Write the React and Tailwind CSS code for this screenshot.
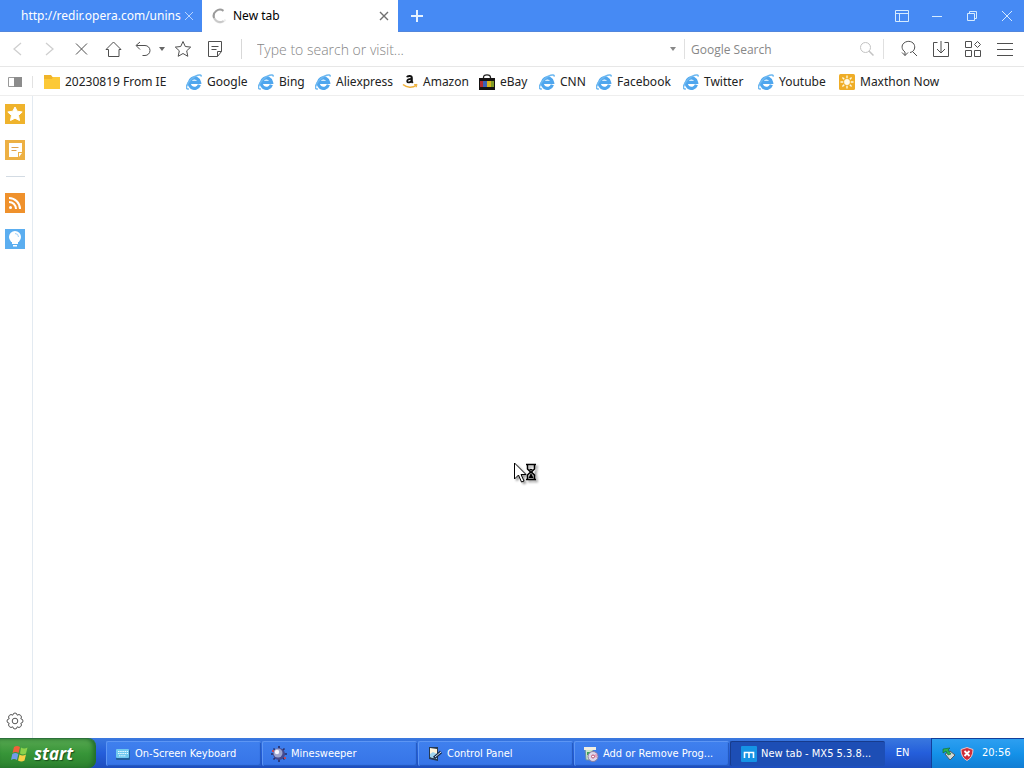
import React, { useState } from 'react';

const bookmarks = [
  { label: '20230819 From IE', icon: 'folder', width: 'w-[142px]' },
  { label: 'Google', icon: 'ie', width: 'w-[72px]' },
  { label: 'Bing', icon: 'ie', width: 'w-[57px]' },
  { label: 'Aliexpress', icon: 'ie', width: 'w-[87px]' },
  { label: 'Amazon', icon: 'amazon', width: 'w-[77px]' },
  { label: 'eBay', icon: 'ebay', width: 'w-[60px]' },
  { label: 'CNN', icon: 'ie', width: 'w-[57px]' },
  { label: 'Facebook', icon: 'ie', width: 'w-[87px]' },
  { label: 'Twitter', icon: 'ie', width: 'w-[75px]' },
  { label: 'Youtube', icon: 'ie', width: 'w-[81px]' },
  { label: 'Maxthon Now', icon: 'maxthon', width: 'w-[102px]' },
];

const tasks = [
  { label: 'On-Screen Keyboard', icon: 'keyboard' },
  { label: 'Minesweeper', icon: 'mine' },
  { label: 'Control Panel', icon: 'panel' },
  { label: 'Add or Remove Prog...', icon: 'programs' },
  { label: 'New tab - MX5 5.3.8...', icon: 'mx', active: true },
];

function BookmarkIcon({ name }) {
  if (name === 'folder') {
    return (
      <svg className="h-4 w-4 shrink-0" viewBox="0 0 16 16">
        <path d="M0 1h7l1.500 2H16v12H0z" fill="#f0b429" />
        <path d="M0 5h8l1-2h7v12H0z" fill="#fcc937" />
      </svg>
    );
  }
  if (name === 'amazon') {
    return (
      <svg className="h-4 w-4 shrink-0" viewBox="0 0 16 16">
        <path d="M5 3.300C5.600 1.300 9.800 1.400 9.800 3.800v3.900l1 1.200" fill="none" stroke="#111" strokeWidth="2" />
        <path d="M9.500 4.800C6.500 4.800 5 5.700 5.200 7.300c.2 1.700 3.600 1.500 4.400-.7" fill="none" stroke="#111" strokeWidth="1.800" />
        <path d="M1 10.500c4 3.400 9.500 3.500 13.300.8" fill="none" stroke="#efb13a" strokeWidth="1.600" />
        <path d="M12 10.700l3-.3-.8 2.900" fill="none" stroke="#efb13a" />
      </svg>
    );
  }
  if (name === 'ebay') {
    return (
      <svg className="h-4 w-4 shrink-0" viewBox="0 0 16 16">
        <path d="M4.500 5V3.500Q4.500.8 8 .8t3.500 2.700V5" fill="none" stroke="#222" strokeWidth="1.300" />
        <path d="M0 4h16v12H0z" fill="#151313" />
        <path d="M1 7h3v6H1z" fill="#b52b30" />
        <path d="M4 7h4v6H4z" fill="#3d62b8" />
        <path d="M8 7h4v6H8z" fill="#d6b51e" />
        <path d="M12 7h3v6h-3z" fill="#819b28" />
      </svg>
    );
  }
  if (name === 'maxthon') {
    return (
      <svg className="h-4 w-4 shrink-0" viewBox="0 0 16 16">
        <rect width="16" height="16" rx="1.500" fill="#efad27" />
        <path d="M8 1.500v13M1.500 8h13M3.400 3.400l9.200 9.200M12.600 3.400l-9.200 9.200" stroke="#fff8d8" strokeWidth="1.400" />
        <circle cx="8" cy="8" r="3.800" fill="#efad27" />
        <circle cx="8" cy="8" r="2.900" fill="#fffbe9" />
      </svg>
    );
  }
  return (
    <svg className="h-4 w-4 shrink-0" viewBox="0 0 16 16" fill="none">
      <path d="M13.400 10.800A5.200 5.200 0 1 1 13.600 8.400H4.500" stroke="#4fa6ee" strokeWidth="3.200" />
      <path d="M2.800 14.800C-1 16-.2 10.500 5 5.400 9.300 1.200 15 -.6 15.400 2.600" stroke="#6db8f1" strokeWidth="1.600" />
    </svg>
  );
}

function TaskIcon({ name }) {
  switch (name) {
    case 'keyboard':
      return (
        <svg className="h-4 w-4 shrink-0" viewBox="0 0 16 16">
          <rect x="1" y="4" width="14" height="10" rx="1" fill="#235f9b" />
          <rect x="1" y="3" width="13" height="9" rx="1" fill="#70c9ef" />
          <path d="M3 5.500h10M3 7.500h10M4 9.800h7" stroke="#e5fbff" strokeDasharray="1.500 .7" />
        </svg>
      );
    case 'mine':
      return (
        <svg className="h-4 w-4 shrink-0" viewBox="0 0 16 16">
          <path d="M8 0v16M0 8h16M2.500 2.500l11 11M13.500 2.500l-11 11" stroke="#272c65" strokeWidth="1.600" />
          <circle cx="8" cy="8" r="6" fill="#454b91" />
          <circle cx="7" cy="7" r="4.500" fill="#9da4cf" />
          <circle cx="6" cy="6" r="2.200" fill="#f4f5ff" />
          <path d="M1 5h2M13 12h2" stroke="#c0495b" strokeWidth="2" />
        </svg>
      );
    case 'panel':
      return (
        <svg className="h-4 w-4 shrink-0" viewBox="0 0 16 16">
          <path d="M2 1h9v14l-9-2z" fill="#263952" />
          <path d="M3 2l7 1v10l-7-2z" fill="#fff5dc" />
          <path d="M3 8l3-2 4 2v5l-7-2z" fill="#9fd4ee" />
          <path d="M7 12l7-6" stroke="#192c48" strokeWidth="3" />
          <path d="M8 11l6-5" stroke="#d9e3ef" />
        </svg>
      );
    case 'programs':
      return (
        <svg className="h-4 w-4 shrink-0" viewBox="0 0 16 16">
          <path d="M2 2h8v12H3z" fill="#cbe6c8" stroke="#668aa8" />
          <path d="M1 1h12v3H1z" fill="#f1eee0" />
          <path d="M4 6h3v3H4z" fill="#3ba45c" />
          <circle cx="10" cy="10.500" r="5" fill="#ded7eb" stroke="#887e9f" />
          <path d="M10 10l4-3v5z" fill="#e4a0bf" />
          <circle cx="10" cy="10.500" r="1.500" fill="#fff" stroke="#b9506f" />
        </svg>
      );
    default:
      return (
        <svg className="h-4 w-4 shrink-0" viewBox="0 0 16 16">
          <rect width="16" height="16" rx="1" fill="#1593e5" />
          <path d="M3.500 12V6.500h9V12M8 6.500V12" fill="none" stroke="#fff" strokeWidth="1.600" />
        </svg>
      );
  }
}

function ToolButton({ label, children, className = 'w-8 text-[#4f4f4f]' }) {
  return (
    <button type="button" aria-label={label} className={`flex h-full shrink-0 items-center justify-center ${className}`}>
      <svg className="h-[18px] w-[18px]" viewBox="0 0 18 18" fill="none" stroke="currentColor">
        {children}
      </svg>
    </button>
  );
}

function TitleBar() {
  return (
    <header className="flex h-8 shrink-0 bg-[#468af4] text-xs">
      <div className="flex w-[202px] items-center border-b border-[#5286dc] pl-[21px] text-white">
        <button type="button" className="w-40 text-left whitespace-nowrap">http://redir.opera.com/unins</button>
        <button type="button" aria-label="Close tab" className="ml-[3px]">
          <svg className="h-2.5 w-2.5" viewBox="0 0 10 10" stroke="#b7d3ff">
            <path d="M1 1l8 8M9 1L1 9" />
          </svg>
        </button>
      </div>
      <div className="flex w-[196px] items-center bg-white pr-[9px] pl-2.5 text-black">
        <svg className="h-4 w-4 shrink-0" viewBox="0 0 16 16" fill="none" strokeWidth="2">
          <path d="M13.500 11.500A6.300 6.300 0 0 1 2.500 11" stroke="#ededed" />
          <path d="M11.500 13A6.300 6.300 0 0 1 2 6" stroke="#c9c9c9" />
          <path d="M2 10A6.300 6.300 0 0 1 11.500 2.800" stroke="#9b9b9b" />
        </svg>
        <button type="button" className="ml-[5px] flex-1 text-left">New tab</button>
        <button type="button" aria-label="Close New tab">
          <svg className="h-2.5 w-2.5" viewBox="0 0 10 10" stroke="#707070" strokeWidth="1.400">
            <path d="M1 1l8 8M9 1L1 9" />
          </svg>
        </button>
      </div>
      <div className="flex flex-1 items-center border-b border-[#5286dc] pl-3 text-white">
        <button type="button" aria-label="New tab">
          <svg className="h-3.5 w-3.5" viewBox="0 0 14 14" stroke="#e5f2ff" strokeWidth="2">
            <path d="M7 1v12M1 7h12" />
          </svg>
        </button>
        <div className="ml-auto flex h-full text-[#d5ebff]">
          <ToolButton label="Skin" className="w-[35px]">
            <path d="M2.500 3.500h13v11h-13zM2.500 6.500h13M6.500 6.500v8" />
          </ToolButton>
          <ToolButton label="Minimize" className="w-[35px]">
            <path d="M4 9.500h10" />
          </ToolButton>
          <ToolButton label="Restore" className="w-[35px]">
            <path d="M4.500 6.500h7v7h-7zM6.500 6.500v-2h7v7h-2" />
          </ToolButton>
          <ToolButton label="Close" className="w-[35px]">
            <path d="M4 4l10 10M14 4L4 14" />
          </ToolButton>
        </div>
      </div>
    </header>
  );
}

function Toolbar() {
  const [address, setAddress] = useState('');
  const [query, setQuery] = useState('');

  return (
    <div className="flex h-[35px] shrink-0 items-center border-b border-[#e7e7e7] pr-[3px] pl-px">
      <ToolButton label="Back" className="w-8 text-[#cfcfcf]">
        <path d="M13 3L6 9l7 6" strokeWidth="1.300" />
      </ToolButton>
      <ToolButton label="Forward" className="w-8 text-[#cfcfcf]">
        <path d="M6 3l7 6-7 6" strokeWidth="1.300" />
      </ToolButton>
      <ToolButton label="Stop">
        <path d="M4 3.500l11 11M15 3.500l-11 11" />
      </ToolButton>
      <ToolButton label="Home">
        <path d="M2 9.500L9.500 2l7.500 7.500h-2v7H4.500v-7z" />
      </ToolButton>
      <ToolButton label="Undo" className="w-7 text-[#4f4f4f]">
        <path d="M6 2L2 5.500l4 4M2.500 5.500H11a5 5 0 0 1 0 10H8.500" />
      </ToolButton>
      <button type="button" aria-label="Closed tabs" className="flex w-2.5 justify-center">
        <svg className="h-1 w-1.5" viewBox="0 0 6 4"><path d="M0 0h6L3 4z" fill="#666" /></svg>
      </button>
      <ToolButton label="Favorite">
        <path d="M9 1.500l2.300 5 5.400.6-4 3.700 1.100 5.500L9 13.500l-4.800 2.800 1.100-5.500-4-3.700 5.400-.6z" />
      </ToolButton>
      <ToolButton label="Notes">
        <path d="M2.500 1.500h13v10l-4 5h-9zM11.500 16.500v-5h4M5.500 6.500h7M5.500 9.500h5" />
      </ToolButton>
      <span className="ml-2.5 h-5 w-px bg-[#d8d8d8]" />
      <input
        type="text"
        aria-label="Address"
        value={address}
        onChange={(e) => setAddress(e.target.value)}
        placeholder="Type to search or visit..."
        className="h-full min-w-0 flex-1 pl-[15px] font-[Open_Sans,sans-serif] text-sm font-light outline-none placeholder:text-[#858585]"
      />
      <button type="button" aria-label="Address history" className="flex w-[22px] justify-center">
        <svg className="h-1 w-1.5" viewBox="0 0 6 4"><path d="M0 0h6L3 4z" fill="#888" /></svg>
      </button>
      <span className="h-5 w-px bg-[#e0e0e0]" />
      <input
        type="text"
        aria-label="Search"
        value={query}
        onChange={(e) => setQuery(e.target.value)}
        placeholder="Google Search"
        className="h-full w-[166px] pl-1.5 font-[Open_Sans,sans-serif] text-xs outline-none placeholder:text-[#878787]"
      />
      <ToolButton label="Search" className="w-8 text-[#c3c3c3]">
        <circle cx="7.500" cy="7.500" r="5" />
        <path d="M11 11l4.500 4.500" strokeWidth="1.500" />
      </ToolButton>
      <span className="mr-[9px] h-5 w-px bg-[#e0e0e0]" />
      <ToolButton label="Snap">
        <path d="M2 12.500l3 3 3-3M5 15.500V12C1.300 9.500 1.300 5 4 3c4-3.200 9.500-1.400 10.500 2.500.9 3.600-1.200 6.500-4.500 7M12.500 11.500l4.500 4.500" />
      </ToolButton>
      <ToolButton label="Downloads">
        <path d="M5.500 2.500h-4v14h15v-14h-4M9 1v11.500M5 9l4 4 4-4" />
      </ToolButton>
      <ToolButton label="Extensions">
        <path d="M1.500 1.500h6v6h-6zM1.500 10.500h6v6h-6zM10.500 10.500h6v6h-6zM13.500 1.500l3 3-3 3-3-3z" />
      </ToolButton>
      <ToolButton label="Menu">
        <path d="M1 3.500h16M1 9.500h16M1 15.500h16" />
      </ToolButton>
    </div>
  );
}

function BookmarkBar() {
  return (
    <nav className="flex h-[29px] shrink-0 items-center border-b border-[#eeeeee] pt-px text-xs text-[#222]">
      <button type="button" aria-label="Toggle sidebar" className="ml-2">
        <svg className="h-2.5 w-3.5" viewBox="0 0 14 10">
          <path d="M.5.500h13v9H.5z" fill="#fff" stroke="#999" />
          <path d="M6 0h8v10H6z" fill="#8c8c8c" />
        </svg>
      </button>
      <span className="mr-[11px] ml-2.5 h-3 w-px bg-[#e2e2e2]" />
      {bookmarks.map((b) => (
        <a key={b.label} href="#" className={`flex items-center gap-[5px] whitespace-nowrap ${b.width}`}>
          <BookmarkIcon name={b.icon} />
          {b.label}
        </a>
      ))}
    </nav>
  );
}

function Sidebar() {
  return (
    <aside className="flex w-[33px] shrink-0 flex-col items-center gap-4 border-r border-[#e3eaf1] pt-2 pr-0.5 pb-2">
      <button type="button" aria-label="Favorites">
        <svg className="h-5 w-5" viewBox="0 0 20 20">
          <path d="M0 0h20v20H0z" fill="#efb32c" />
          <path d="M10 3l2.200 4.200 5 .8-3.700 3.400 1 5.100L10 14.200l-4.500 2.300 1-5.100L2.800 8l5-.8z" fill="#fff" stroke="#fff" strokeLinejoin="round" />
        </svg>
      </button>
      <button type="button" aria-label="Notes">
        <svg className="h-5 w-5" viewBox="0 0 20 20">
          <path d="M0 0h20v20H0z" fill="#edb043" />
          <path d="M4 3h13v9h-4v5H4z" fill="#fff" />
          <path d="M6.500 7.500h7M6.500 10.500h5" stroke="#dfa24e" />
          <path d="M14 17v-4h3z" fill="#fff" />
        </svg>
      </button>
      <span className="h-px w-[19px] bg-[#d3dbe3]" />
      <button type="button" aria-label="RSS">
        <svg className="h-5 w-5" viewBox="0 0 20 20" fill="none" stroke="#fff" strokeWidth="2">
          <path d="M0 0h20v20H0z" fill="#ef912c" stroke="none" />
          <circle cx="5.500" cy="14.500" r="1.500" fill="#fff" stroke="none" />
          <path d="M4 9a7 7 0 0 1 7 7M4 5a11 11 0 0 1 11 11" />
        </svg>
      </button>
      <button type="button" aria-label="Discover">
        <svg className="h-5 w-5" viewBox="0 0 20 20">
          <path d="M0 0h20v20H0z" fill="#5baef0" />
          <circle cx="10" cy="8" r="6" fill="#fff" />
          <path d="M7 12h6v3H7zM8 16h4v1.500H8z" fill="#fff" />
          <path d="M10 4.500a3.500 3.500 0 0 1 3.500 3.500" fill="none" stroke="#9fd0f7" />
        </svg>
      </button>
      <button type="button" aria-label="Settings" className="mt-auto">
        <svg className="h-[18px] w-[18px]" viewBox="0 0 18 18" fill="none" stroke="#555" strokeLinejoin="round">
          <path d="M7.500 1.500Q9 .5 10.500 1.500l.7 1.700 1.800-.7q2 .4 2.500 2.500l-.7 1.800 1.700.7q1 1.500 0 3l-1.700.7.7 1.800q-.5 2.100-2.500 2.500l-1.800-.7-.7 1.700q-1.500 1-3 0l-.7-1.700-1.800.7q-2-.4-2.500-2.500l.7-1.800-1.700-.7q-1-1.500 0-3l1.700-.7L2.500 5Q3 2.900 5 2.500l1.800.7z" />
          <circle cx="9" cy="9" r="2.800" />
        </svg>
      </button>
    </aside>
  );
}

function Taskbar() {
  return (
    <footer className="flex h-[30px] shrink-0 bg-linear-to-b from-[#3a78df] via-[#245edb] to-[#1d4dbd] font-[DejaVu_Sans_Condensed,sans-serif] text-[11px] text-white">
      <button
        type="button"
        className="mr-2.5 flex w-24 shrink-0 items-center rounded-r-lg border-t border-[#2c713c] bg-linear-to-b from-[#56a750] via-[#379538] to-[#2c812e] pl-[11px] font-[Open_Sans,sans-serif] text-[17px] leading-none font-bold italic shadow-[inset_-3px_0_4px_#226d2b] [text-shadow:1px_1px_1px_#174d1b]"
      >
        <svg className="mr-[5px] h-[18px] w-[18px]" viewBox="0 0 18 18">
          <path d="M3 2q3-2 6 0L7.500 8q-3-2-6 0z" fill="#ef603a" />
          <path d="M10 2.500q3 2 6.500 0L15 8.500q-3 2-6 0z" fill="#8cd14b" />
          <path d="M1.300 9q3-2 6 0L6 15q-3-2-6 0z" fill="#719be9" />
          <path d="M8.500 9.500q3 2 6.500 0l-1.500 6q-3 2-6.500 0z" fill="#f8cf46" />
        </svg>
        start
      </button>
      <div className="flex min-w-0 flex-1 gap-px pt-[3px] pb-0.5">
        {tasks.map((t) => (
          <button
            key={t.label}
            type="button"
            className={`flex w-[155px] min-w-0 items-center gap-1 rounded-xs border-t border-l pl-2 whitespace-nowrap ${t.active ? 'border-[#173b8c] bg-[#1d4eb5] pl-2.5' : 'border-[#5d96f4] bg-linear-to-b from-[#3f80ee] to-[#3674e7] shadow-[inset_-1px_-1px_1px_#2358be]'}`}
          >
            <TaskIcon name={t.icon} />
            <span>{t.label}</span>
          </button>
        ))}
      </div>
      <button type="button" className="w-[45px] shrink-0 pr-3">EN</button>
      <div className="flex w-[93px] shrink-0 items-center border-t border-l border-[#123f9b] bg-linear-to-b from-[#2d9ff0] via-[#1492e9] to-[#117dd3] pl-2.5">
        <svg className="h-3.5 w-3.5" viewBox="0 0 14 14">
          <path d="M3 7l5-3 5 4-5 5z" fill="#d4d8d5" stroke="#4d5c66" />
          <path d="M1 2l7-1-2 2 3 4-3 1-2-4-3 2z" fill="#29b452" stroke="#16652b" strokeWidth=".6" />
        </svg>
        <svg className="ml-1 h-3.5 w-3.5" viewBox="0 0 14 14">
          <path d="M7 .5l6 2q0 8-6 11-6-3-6-11z" fill="#d02d37" stroke="#f0c4c5" />
          <path d="M4.500 4l5 5M9.500 4l-5 5" stroke="#fff" strokeWidth="1.800" />
        </svg>
        <span className="ml-2">20:56</span>
      </div>
    </footer>
  );
}

function BusyCursor() {
  return (
    <svg className="absolute top-[366px] left-[481px] h-6 w-7 drop-shadow-[2px_2px_1px_#00000066]" viewBox="0 0 28 24">
      <path d="M.5 1v16l4-4 3 7 2.500-1-3-6.500H12z" fill="#fff" stroke="#000" />
      <path d="M12 2.500h10M12 17.500h10M13.500 3v4l3 3-3 3v4M20.500 3v4l-3 3 3 3v4" fill="#fff" stroke="#000" strokeWidth="1.500" />
      <path d="M15 7h4l-2 2zM17 11l2.500 5h-5z" fill="#000" />
    </svg>
  );
}

export default function App() {
  return (
    <div className="flex h-screen flex-col bg-white font-[Noto_Sans,sans-serif]">
      <TitleBar />
      <Toolbar />
      <BookmarkBar />
      <div className="flex min-h-0 flex-1">
        <Sidebar />
        <main className="relative flex-1">
          <BusyCursor />
        </main>
      </div>
      <Taskbar />
    </div>
  );
}
